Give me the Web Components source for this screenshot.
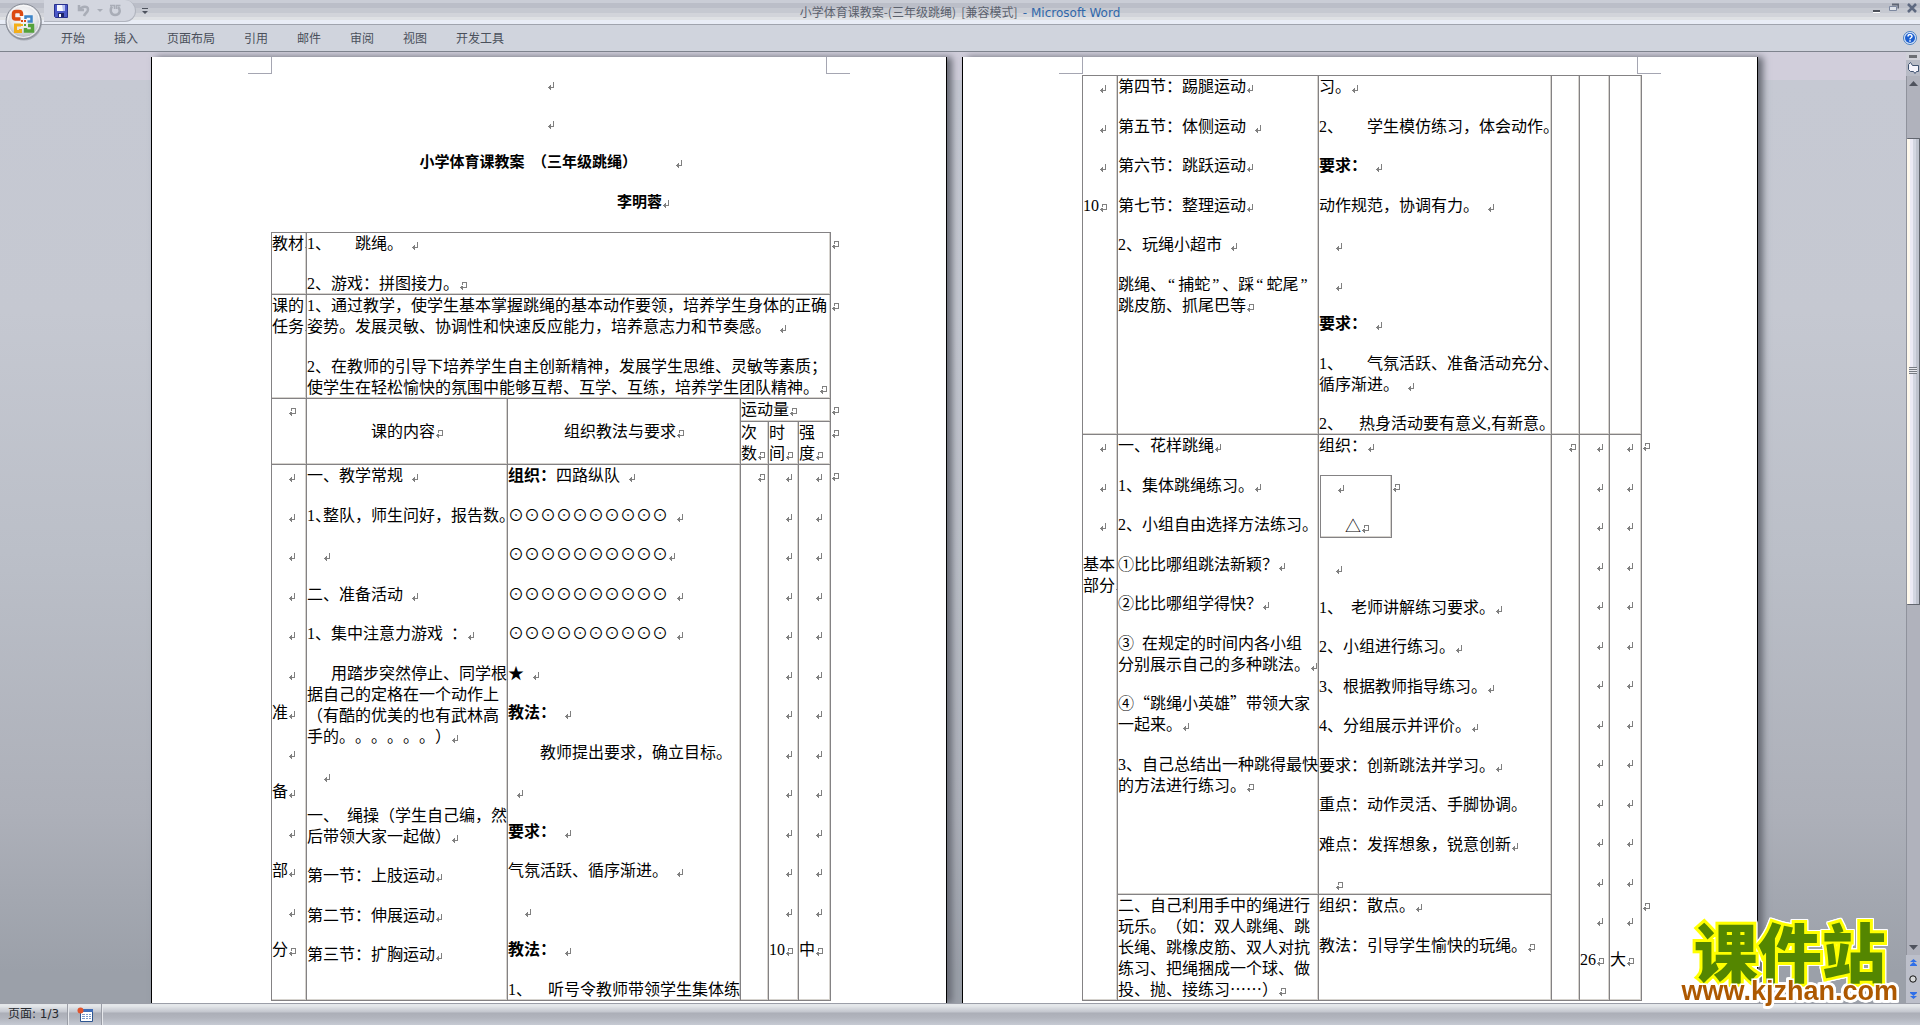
<!DOCTYPE html>
<html lang="zh-CN">
<head>
<meta charset="utf-8">
<title>小学体育课教案-(三年级跳绳) [兼容模式] - Microsoft Word</title>
<style>
html,body{margin:0;height:100%;overflow:hidden}
body{font-family:"Liberation Sans","Noto Sans CJK SC",sans-serif;font-size:12px;background:#c6c9d3;text-spacing-trim:space-all}
</style>
</head>
<body>
<word-window></word-window>
<script>
function define(name, html, setup){
  customElements.define(name, class extends HTMLElement{
    constructor(){
      super();
      this.attachShadow({mode:'open'}).innerHTML = html;
    }
    connectedCallback(){ if(setup && !this.ready){ this.ready = true; setup.call(this, this.shadowRoot); } }
  });
}

/* paragraph mark and end-of-cell mark */
define('para-mark', `<style>
:host{display:inline-block;width:8px;height:8px;line-height:0;vertical-align:2px}
svg{display:block}
:host([kind=cell]) .para,:host(:not([kind=cell])) .cell{display:none}
</style>
<svg width="8" height="8" viewBox="0 0 8 8" fill="none" stroke="#808080" shape-rendering="crispEdges" aria-hidden="true">
<path class="para" d="M6.500 0V6M1 5.500H7M2.500 4V7M3.500 3V8"/>
<path class="cell" d="M3 .5H8M7.500 0V6M3.500 0V3M1 5.500H8M2.500 4V7M3.500 4V8"/>
</svg>`);

function markup(text){
  return text
    .replace(/ /g, '  ')
    .replace(/<(.+?)>/g, '<span class="wide">$1</span>')
    .replace(/\{(.)\}/g, '<span class="half">$1</span>')
    .replace(/\^(.)/g, '<span class="quote">$1</span>')
    .replace(/\*(.+?)\*/g, '<b>$1</b>')
    .replace(/↵/g, '<para-mark></para-mark>')
    .replace(/¤/g, '<para-mark kind="cell"></para-mark>');
}
function paragraphs(list){
  return list.map(p => p === '#box'
    ? `<table class="box"><tr><td>${paragraphs(['  ↵','   △¤'])}</td><th class="end">${paragraphs(['¤'])}</th></tr></table>`
    : `<p>${p.split('|').map(l => `<span class="line">${markup(l)}</span>`).join('')}</p>`).join('');
}
const times = (n, s) => Array(n).fill(s);

const lessons = {
  first: [
    [{t:['教材¤']},{s:5,t:['1、   跳绳。 ↵','2、游戏：拼图接力。¤']},0],
    [{t:['课的|任务¤']},{s:5,t:['1、通过教学，使学生基本掌握跳绳的基本动作要领，培养学生身体的正确|姿势。发展灵敏、协调性和快速反应能力，培养意志力和节奏感。 ↵','2、在教师的引导下培养学生自主创新精神，发展学生思维、灵敏等素质；|使学生在轻松愉快的氛围中能够互帮、互学、互练，培养学生团队精神。¤']},0],
    [{r:2,t:['  ¤']},{r:2,c:1,t:['课的内容¤']},{r:2,c:1,t:['组织教法与要求¤']},{s:3,k:'short',t:['运动量¤']},0],
    [{t:['次|数¤']},{t:['时|间¤']},{t:['强|度¤']},0],
    [{t:[...times(6,'  ↵'),'准↵','  ↵','备↵','  ↵','部↵','  ↵','分¤']},
     {t:['一、教学常规 ↵','1{、}整队，师生问好，报告数{。}','  ↵','二、准备活动 ↵','1、集中注意力游戏 ：↵','   用踏步突然停止、同学根|据自己的定格在一个动作上|（有酷的优美的也有武林高|手的。。。。。。）↵','  ↵','一、 绳操（学生自己编，然|后带领大家一起做）↵','第一节：上肢运动↵','第二节：伸展运动↵','第三节：扩胸运动↵']},
     {t:['*组织：*四路纵队 ↵','<⊙⊙⊙⊙⊙⊙⊙⊙⊙⊙> ↵','<⊙⊙⊙⊙⊙⊙⊙⊙⊙⊙>↵','<⊙⊙⊙⊙⊙⊙⊙⊙⊙⊙> ↵','<⊙⊙⊙⊙⊙⊙⊙⊙⊙⊙> ↵','<★> ↵','*教法：* ↵','    教师提出要求，确立目标。 ',' ↵','*要求：* ↵','气氛活跃、循序渐进。 ↵','  ↵','*教法：* ↵','1、  听号令教师带领学生集体练']},
     {t:['  ¤']},{t:[...times(12,'  ↵'),'10¤']},{t:[...times(12,'  ↵'),'中¤']},0]
  ],
  second: [
    [{t:['  ↵','  ↵','  ↵','10¤']},
     {t:['第四节：踢腿运动↵','第五节：体侧运动 ↵','第六节：跳跃运动↵','第七节：整理运动↵','2、玩绳小超市 ↵','跳绳、^“捕蛇^”、踩^“蛇尾^”|跳皮筋、抓尾巴等¤']},
     {t:['习。↵','2、   学生模仿练习，体会动作{。}','*要求：* ↵','动作规范，协调有力。 ↵','  ↵','  ↵','*要求：* ↵','1、   气氛活跃、准备活动充分{、}|循序渐进。 ↵','2、  热身活动要有意义,有新意{。}']},
     {t:[]},{t:[]},{t:[]},1],
    [{r:2,t:['  ↵','  ↵','  ↵','基本|部分¤']},
     {t:['一、花样跳绳↵','1、集体跳绳练习。↵','2、小组自由选择方法练习。','①比比哪组跳法新颖？↵','②比比哪组学得快？↵','③ 在规定的时间内各小组|分别展示自己的多种跳法。↵','④<“>跳绳小英雄<”>带领大家|一起来。↵','3、自己总结出一种跳得最快|的方法进行练习。¤']},
     {t:['组织：↵','#box','  ↵','1、 老师讲解练习要求。↵','2、小组进行练习。↵','3、根据教师指导练习。↵','4、分组展示并评价。↵','要求：创新跳法并学习。↵','重点：动作灵活、手脚协调。','难点：发挥想象，锐意创新↵','  ¤']},
     {r:2,t:['  ¤']},{r:2,t:[...times(13,'  ↵'),'26¤']},{r:2,t:[...times(13,'  ↵'),'大¤']},0],
    [{t:['二、自己利用手中的绳进行|玩乐。（如：双人跳绳、跳|长绳、跳橡皮筋、双人对抗|练习、把绳捆成一个球、做|投、抛、接练习<……>）¤']},
     {t:['组织：散点。↵','教法：引导学生愉快的玩绳。¤']},0]
  ]
};

define('lesson-table', `<style>
:host{display:block;margin-left:119px}
table{table-layout:fixed;border-collapse:separate;border-spacing:0;width:572px}
td,th{padding:0;vertical-align:top;text-align:left;font-weight:400}
td{border-left:1px solid #848284;border-top:1px solid #848284;box-shadow:inset -1px -1px #d6d3ce;overflow:hidden}
th.end{border-left:1px solid #848284}
.last{border-bottom:1px solid #848284}
td.mid{vertical-align:middle;text-align:center}
td.short{height:22px}
p{margin:0}
p:not(:last-child){margin-bottom:18px}
p:not(:last-child):nth-child(odd){margin-bottom:19px}
.line{display:block;height:21px;line-height:21px;white-space:pre}
.wide{font-family:"Noto Sans CJK SC",sans-serif;line-height:16px}
.half{font-feature-settings:"halt"}
.quote{padding:0 3px 0 2px}
table.box{width:84px;margin:0 0 19px 1px}
table.box td{width:70px;border-bottom:1px solid #848284}
</style><table><colgroup><col style="width:35px"><col style="width:201px"><col style="width:233px"><col style="width:28px"><col style="width:30px"><col style="width:32px"><col style="width:13px"></colgroup><tbody></tbody></table>`,
function(root){
  const rows = lessons[this.getAttribute('part-of-lesson')];
  root.querySelector('tbody').innerHTML = rows.map((row, i) => '<tr>' + row.map(c => {
    if(typeof c === 'number') return `<th class="end">${c ? '' : paragraphs(['¤'])}</th>`;
    const last = i + (c.r || 1) >= rows.length;
    return `<td rowspan="${c.r || 1}" colspan="${c.s || 1}" class="${[last && 'last', c.c && 'mid', c.k].filter(Boolean).join(' ')}">${paragraphs(c.t)}</td>`;
  }).join('') + '</tr>').join('');
});

define('doc-page', `<style>
:host{display:block;box-sizing:border-box;flex:0 0 796px;background:#fff;border:solid #000;border-width:0 1px;box-shadow:5px 0 7px #666973;
color:#000;font:16px/21px "Liberation Serif","Noto Sans CJK SC",serif}
.corners{display:flex;justify-content:space-between;padding:0 96px}
.corners i{box-sizing:border-box;width:24px;height:17px;border-bottom:1px solid #a5a6b2}
.corners i:first-child{border-right:1px solid #a5a6b2}
.corners i:last-child{border-left:1px solid #a5a6b2}
</style><div class="corners"><i></i><i></i></div><slot></slot>`);

define('doc-heading', `<style>
:host{display:block;margin:0 115px 19px 119px;text-align:center;font-size:15px}
p,h1{margin:0 0 18px;font-size:15px;line-height:21px;font-weight:700;white-space:pre}
p:first-child,h1{margin-bottom:19px}
.author{text-indent:185px;margin:0}
</style><p><para-mark></para-mark></p><p><para-mark></para-mark></p><h1>小学体育课教案  （三年级跳绳）          <para-mark></para-mark></h1><p class="author">李明蓉<para-mark></para-mark></p>`);

define('title-bar', `<style>
:host{display:grid;grid-template-columns:1fr auto 1fr;align-items:start;height:24px;border-bottom:1px solid #a0a4ad;
background:linear-gradient(#cacdd6 0 3px,#bbbec8 3px 8px,#c6c9d1 8px 13px,#d2d4da 13px 17px,#dfe1e4 17px 20px,#e9edf6 20px)}
.quick{display:flex;align-items:center;height:22px;padding-left:44px}
.pill{display:flex;align-items:center;height:22px;box-sizing:border-box;width:92px;border:1px solid #b0b4be;border-left:0;border-top:0;border-radius:0 11px 11px 0;background:#d3d6df;padding-left:10px;gap:6px}
button{border:0;padding:0;background:none;display:block;line-height:0}
.more{margin-left:6px}
.title{height:24px;line-height:24px;font-size:12px;color:#5b616d;white-space:pre;font-family:"Noto Sans CJK SC",sans-serif}
.title span{color:#3068aa;font-family:"DejaVu Sans",sans-serif}
.win{display:flex;justify-content:flex-end;gap:8px;padding:3px 3px 0 0}
</style>
<div class="quick"><div class="pill">
<button aria-label="保存"><svg width="14" height="14" viewBox="0 0 14 14"><path d="M.5 .5H13.500V13.500H1.500L.5 12.500Z" fill="#4a58c8" stroke="#27308c"/><path d="M3 1H11V7H3Z" fill="#f4f6ff"/><path d="M8 1H11V7H9Z" fill="#b5bff0"/><path d="M4 9H10V13H4Z" fill="#1d2468"/><path d="M5 10H7V13H5Z" fill="#fff"/></svg></button>
<button aria-label="撤消" style="margin-left:3px"><svg width="14" height="13" viewBox="0 0 14 13" fill="none" stroke="#a9adb7" stroke-width="2.500"><path d="M2 1V6H7M2.500 5.500C5 2 11 1.500 11 5.500C11 8.500 8 9 7 12"/></svg></button>
<button aria-label="撤消列表"><svg width="6" height="4"><path d="M0 0H6L3 3Z" fill="#a9adb7"/></svg></button>
<button aria-label="重复"><svg width="13" height="13" viewBox="0 0 13 13" fill="none" stroke="#a9adb7" stroke-width="2.500"><path d="M3 2.500C.5 6 2 11 6 11C11 11 12 6 9 3"/><path d="M1 1.500H5.500V5M7.500 5V1.500H11.500" stroke-width="1.500"/></svg></button>
</div>
<button class="more" aria-label="自定义快速访问工具栏"><svg width="6" height="7"><path d="M0 0H6V1H0ZM0 3H6L3 6Z" fill="#4e535e"/></svg></button></div>
<div class="title">小学体育课教案-(三年级跳绳)  [兼容模式]  <span>- Microsoft Word</span></div>
<div class="win">
<button aria-label="最小化"><svg width="9" height="10"><path d="M1 7H8V9H1Z" fill="#4c505a"/><path d="M1 9H8V10H1Z" fill="#fff"/></svg></button>
<button aria-label="还原"><svg width="10" height="10" fill="none" stroke="#606675"><path d="M3 1.500H9.500V5.500" stroke-width="2"/><path d="M.5 3.500H7.500V7.500H.5Z" fill="#dfe3ea" stroke="#7d88a0"/></svg></button>
<button aria-label="关闭"><svg width="10" height="10"><path d="M1 1L9 9M9 1L1 9" stroke="#5e6980" stroke-width="2.500"/></svg></button>
</div>`);

define('office-button', `<style>
:host{display:block;position:absolute;left:4px;top:2px}
button{border:0;padding:0;background:none;display:block}
</style><button aria-label="Office 按钮"><svg width="40" height="40" viewBox="0 0 40 40">
<defs><radialGradient id="g" cx=".5" cy=".35" r=".7"><stop offset="0" stop-color="#fff"/><stop offset=".55" stop-color="#e4e5e9"/><stop offset="1" stop-color="#a6a9b1"/></radialGradient></defs>
<circle cx="20" cy="20.500" r="18" fill="#8c9099" opacity=".6"/><circle cx="19.500" cy="19.500" r="17.500" fill="url(#g)" stroke="#858a94"/>
<circle cx="19.500" cy="19.500" r="16" fill="none" stroke="#fff" opacity=".8"/>
<path d="M16.500 17H11.500Q9.500 17 9.500 15V12Q9.500 9.500 12 9.500H15Q17.500 9.500 17.500 12V14" fill="none" stroke="#dc4a12" stroke-width="3.500"/>
<path d="M21.500 17V14.500H27.500V19.500H23.500" fill="none" stroke="#3d84c8" stroke-width="2.500"/>
<path d="M17 23H11.500V29.500H16.500V27" fill="none" stroke="#f3ae1a" stroke-width="3"/>
<path d="M21.500 26V29H28.500V23.500H24" fill="none" stroke="#55a23c" stroke-width="3.500"/>
<path d="M17 18H19V20H17Z" fill="#dc4a12"/><path d="M20 18H22V20H20Z" fill="#dc4a12"/><path d="M17 22H19V24H17Z" fill="#f3ae1a"/><path d="M20 22H22V24H20Z" fill="#55a23c"/>
</svg></button>`);

define('ribbon-tabs', `<style>
:host{display:flex;align-items:center;height:26px;background:#d0d4dd;border-bottom:1px solid #7e838d;box-shadow:0 1px #d6dbe1;padding:0 3px 0 61px}
nav{display:flex;gap:29px;flex:1}
button{border:0;padding:0;background:none;font:12px/20px "Noto Sans CJK SC",sans-serif;color:#4a505b}
.help{line-height:0}
</style><nav><button>开始</button><button>插入</button><button>页面布局</button><button>引用</button><button>邮件</button><button>审阅</button><button>视图</button><button>开发工具</button></nav>
<button class="help" aria-label="帮助"><svg width="14" height="14" viewBox="0 0 14 14"><circle cx="7" cy="7" r="6.500" fill="#dce8fa" stroke="#4b7fc0"/><circle cx="7" cy="7" r="5" fill="#1c5fd0"/><path d="M5 5.500C5 3 9 3 9 5.300C9 6.800 7 6.700 7 8.300M7 9.300V10.700" fill="none" stroke="#fff" stroke-width="1.500"/></svg></button>`);

define('scroll-rail', `<style>
:host{display:flex;flex-direction:column;flex:0 0 14px;background:#bdc0c9}
button{border:0;padding:0;background:none;display:flex;align-items:center;justify-content:center;flex:none;width:14px}
.split{height:8px;background:#d1d2da;align-items:flex-end}
.split i{width:8px;height:3px;margin-bottom:2px;background:#6c6e74}
.ruler{height:16px;background:#b8bbc6}
.track{flex:1;display:flex;flex-direction:column;box-sizing:border-box;background:#b0b2bc;border-left:1px solid #8f929c}
.track button{width:13px;height:15px}
.thumb{flex:466;margin-top:47px;box-sizing:border-box;border:1px solid #62666f;border-left:0;border-radius:1px;background:linear-gradient(90deg,#fff9ec 0 3px,#eceaf6 3px 6px,#d3d6e2 6px 9px,#bfc3cf 9px);display:flex;justify-content:center}
.thumb i{margin-top:228px;width:8px;height:7px;background:repeating-linear-gradient(#777b84 0 1px,#e8e8ef 1px 2px)}
.rest{flex:336}
.browse{height:48px;display:flex;flex-direction:column;justify-content:space-around;background:#bcbfca}
</style>
<button class="split" aria-label="拆分"><i></i></button>
<button class="ruler" aria-label="标尺"><svg width="13" height="12" fill="#f4f3fb" stroke="#3f5270"><path d="M1.500 2.500L3.500 .5L5.500 3.500H11.500V9.500H9.500L8 11.500L6.500 9.500H3.500L1.500 7.500Z"/></svg></button>
<div class="track"><button aria-label="向上"><svg width="9" height="5"><path d="M0 5L4.500 0L9 5Z" fill="#4f535d"/></svg></button>
<div class="thumb"><i></i></div><div class="rest"></div>
<button aria-label="向下"><svg width="9" height="5"><path d="M0 0L4.500 5L9 0Z" fill="#4f535d"/></svg></button></div>
<div class="browse"><button aria-label="上一页"><svg width="7" height="7"><path d="M0 3L3.500 0L7 3ZM0 6L3.500 3L7 6V7H0Z" fill="#2f6fe8"/></svg></button>
<button aria-label="选择浏览对象"><svg width="8" height="8"><circle cx="4" cy="4" r="3.200" fill="#d6d8da" stroke="#111"/></svg></button>
<button aria-label="下一页"><svg width="7" height="7"><path d="M0 0H7V1L3.500 4L0 1ZM0 4H7L3.500 7Z" fill="#2f6fe8"/></svg></button></div>`);

define('status-bar', `<style>
:host{display:flex;height:22px;box-sizing:border-box;border-top:1px solid #9b9ea8;font:12px/20px "DejaVu Sans","Noto Sans CJK SC",sans-serif;color:#26292f;
background:linear-gradient(#e4e7ea 0 2px,#d2d5db 5px,#c3c6ce 8px,#abaeb7 9px,#b2b5be 14px,#c6cad3)}
div{box-sizing:border-box;border-right:1px solid #9a9da6;box-shadow:1px 0 #e6e8ec;white-space:pre}
.page{width:68px;padding-left:8px}
.macro{width:34px;padding:3px 0 0 9px;line-height:0}
</style><div class="page">页面: 1/3</div><div class="macro"><svg width="16" height="15"><path d="M3.500 2.500H15.500V14.500H3.500Z" fill="#fff" stroke="#2d5590"/><path d="M3 2H16V5H3Z" fill="#3f6db8"/><path d="M5 7H8V8H5ZM9 7H11V8H9ZM12 7H14V8H12ZM5 9H8V10H5ZM9 9H11V10H9ZM12 9H14V10H12ZM5 11H8V12H5ZM9 11H11V12H9ZM12 11H14V12H12Z" fill="#7c9bcb"/><circle cx="3.500" cy="3.500" r="3" fill="#e0532c"/></svg></div>`);

define('site-badge', `<style>
:host{position:absolute;right:22px;bottom:20px;display:block;text-align:center;color:#ad5800;font:700 27px/28px "Liberation Sans",sans-serif;
filter:drop-shadow(1px 0 #fff) drop-shadow(-1px 0 #fff) drop-shadow(0 1px #fff) drop-shadow(0 -1px #fff)}
strong{display:block;font:900 64px/56px "Noto Sans CJK SC",sans-serif;color:#548600;-webkit-text-stroke:6px #ff0;paint-order:stroke fill}
span{display:block;-webkit-text-stroke:3px #fff;paint-order:stroke fill}
</style><strong>课件站</strong><span>www.kjzhan.com</span>`);

define('word-window', `<style>
:host{display:flex;flex-direction:column;height:100vh;position:relative;overflow:hidden}
main{flex:1;min-height:0;display:flex;background:linear-gradient(#d1cedb 0 28px,#c6c9d3 28px,#c5c8d1 260px,#bbbfc8 500px,#adb0b9 760px,#9ba0a9 920px)}
.desk{flex:1;display:flex;justify-content:center;gap:15px;padding:5px 0 0 3px;overflow:hidden}
title-bar,ribbon-tabs,status-bar{flex:none}
.second{padding-top:1px}
</style>
<title-bar></title-bar><ribbon-tabs></ribbon-tabs>
<main><div class="desk">
<doc-page><doc-heading></doc-heading><lesson-table part-of-lesson="first"></lesson-table></doc-page>
<doc-page><div class="second"><lesson-table part-of-lesson="second"></lesson-table></div></doc-page>
</div><scroll-rail></scroll-rail></main>
<status-bar></status-bar><office-button></office-button><site-badge></site-badge>`);
</script>
</body>
</html>
